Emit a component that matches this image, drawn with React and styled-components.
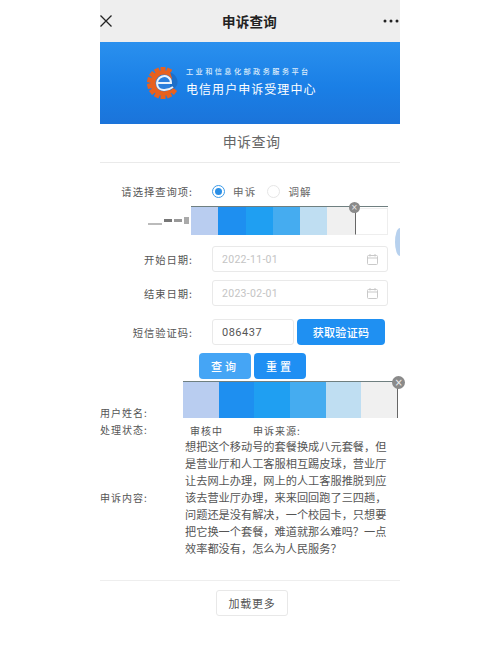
import React from "react";
import styled, { createGlobalStyle } from "styled-components";

const Global = createGlobalStyle`
  html, body { margin: 0; padding: 0; background: #fff; overflow: hidden; }
  body { font-family: "Noto Sans CJK SC", "Noto Sans", sans-serif; }
`;
const Phone = styled.div`
  position: relative; width: 300px; height: 655px; margin: 0 auto; background: #fff;
`;
const Nav = styled.div`
  height: 42px; background: #eeeeee; display: flex; align-items: center; justify-content: space-between;
  padding-right: 1px; box-sizing: border-box;
`;
const NavTitle = styled.div`font-size: 13.5px; font-weight: 700; color: #222; letter-spacing: .3px; margin-left: 3px;`;
const Banner = styled.div`
  height: 82px; background: linear-gradient(180deg, #2a90ee 0%, #1a7fe6 55%, #1b74da 100%);
  display: flex; align-items: center; padding-left: 46px; box-sizing: border-box; gap: 6px;
`;
const BannerText = styled.div`display: flex; flex-direction: column; color: #fff; margin-top: -2px;`;
const BannerSmall = styled.div`font-size: 7.2px; line-height: 11px; letter-spacing: 2.4px; font-weight: 500; color: #dcecfb;`;
const BannerBig = styled.div`font-size: 12px; line-height: 18px; letter-spacing: 1.05px; margin-top: 3px;`;
const Heading = styled.div`
  height: 38px; border-bottom: 1px solid #eaeaea; display: flex; align-items: center; justify-content: center;
  box-sizing: content-box; font-size: 14px; color: #666; letter-spacing: .4px; padding-left: 3px; line-height: 34px;
  & > span { display: block; margin-top: -4px; }
`;
const Form = styled.div`display: flex; flex-direction: column; padding-top: 17px;`;
const Row = styled.div`display: flex; align-items: center; height: ${p => p.$h}px; margin-top: ${p => p.$mt || 0}px; margin-bottom: ${p => p.$mb || 0}px;`;
const Label = styled.div`
  width: 93px; text-align: right; font-size: 10.3px; color: #555; letter-spacing: 1px; flex: none; white-space: nowrap;
`;
const Radios = styled.div`display: flex; align-items: center; margin-left: 19px; font-size: 10.5px; color: #666; letter-spacing: 1.2px;`;
const Radio = styled.span`
  width: 13px; height: 13px; border-radius: 50%; box-sizing: border-box; margin-right: 8px; flex: none;
  border: 1px solid ${p => p.$on ? "#3c9be8" : "#e6e6e6"}; display: flex; align-items: center; justify-content: center;
  &::after { content: ""; width: 7px; height: 7px; border-radius: 50%; background: ${p => p.$on ? "#2b8fe6" : "transparent"}; }
`;
const RadioText = styled.span`margin-right: ${p => p.$mr || 0}px;`;
const BlurLabel = styled.div`width: 90px; display: flex; justify-content: flex-end; align-items: center; flex: none; gap: 2px; padding-right: 1px; box-sizing: border-box;`;
const BlurMark = styled.span`display: block; width: ${p => p.$w}px; height: ${p => p.$h}px; background: ${p => p.$c}; margin-top: ${p => p.$t || 0}px;`;
const Redact = styled.div`
  position: relative; display: flex; flex: none; height: ${p => p.$h}px; margin-left: ${p => p.$ml || 0}px;
  border-top: 1px solid #6f7f80; box-sizing: border-box;
  border-right: ${p => p.$edge ? "1px solid #666" : "none"};
`;
const Swatch = styled.div`width: ${p => p.$w}px; background: ${p => p.$c};`;
const Badge = styled.span`
  position: absolute; top: ${p => p.$t}px; right: ${p => p.$r}px; width: ${p => p.$s}px; height: ${p => p.$s}px; border-radius: 50%;
  background: #8a8a8a; color: #eee; font-size: ${p => p.$s - 3}px; line-height: ${p => p.$s}px; text-align: center; font-family: "DejaVu Sans", sans-serif;
`;
const RedactEnd = styled.div`width: 33px; height: 27px; margin-top: 1px; border: 1px solid #eee; border-left: 1px solid #666; box-sizing: border-box; background: #fff; flex: none;`;
const DateField = styled.div`
  margin-left: 19px; width: 176px; height: 26px; border: 1px solid #e9e9e9; border-radius: 3px; box-sizing: border-box;
  display: flex; align-items: center; justify-content: space-between; padding: 0 9px; font-size: 10.5px; color: #c4c4c4; letter-spacing: .3px;
  font-family: "Roboto", sans-serif;
`;
const CodeRow = styled.div`display: flex; margin-left: 19px; gap: 3px;`;
const CodeInput = styled.div`
  width: 82px; height: 26px; border: 1px solid #e9e9e9; border-radius: 3px; box-sizing: border-box; display: flex; align-items: center;
  padding-left: 9px; font-size: 11px; color: #555; letter-spacing: .5px; font-family: "Roboto", sans-serif;
`;
const Primary = styled.div`
  width: ${p => p.$w}px; height: 26px; background: ${p => p.$c}; color: #fff; border-radius: 4px; display: flex; align-items: center; justify-content: center;
  font-size: 11px; letter-spacing: ${p => p.$ls}px; font-weight: 500; flex: none;
`;
const Actions = styled.div`display: flex; gap: 3px; margin-left: 99px; height: 26px; margin-top: 8px;`;
const Results = styled.div`display: flex; flex-direction: column; margin-top: 2px;`;
const ResultRow = styled.div`display: flex; align-items: flex-end; height: 37px;`;
const ResultLabel = styled.div`width: 83px; font-size: 10px; line-height: 14px; color: #555; letter-spacing: 1px; flex: none; white-space: nowrap; margin-bottom: ${p => p.$mb || 0}px;`;
const StatusRow = styled.div`display: flex; height: 20px; align-items: center; font-size: 10px; color: #555; letter-spacing: 1px; padding-top: 4px; box-sizing: border-box;`;
const StatusValue = styled.span`margin-left: ${p => p.$ml}px; white-space: nowrap;`;
const ContentRow = styled.div`display: flex; align-items: center;`;
const ContentText = styled.div`
  width: 203px; margin-left: 2px; font-size: 11.2px; line-height: 17px; color: #555;
`;
const Divider = styled.div`height: 1px; background: #eeeeee; margin-top: 23px;`;
const More = styled.div`
  width: 72px; height: 26px; margin: 9px 0 0 116px; border: 1px solid #e8e8e8; border-radius: 3px; box-sizing: border-box;
  display: flex; align-items: center; justify-content: center; font-size: 11px; color: #555; letter-spacing: .8px;
`;
const Floater = styled.span`
  position: absolute; right: 0; top: 228px; width: 5px; height: 28px; border-radius: 5px 0 0 5px / 14px 0 0 14px; background: #b7d1ee;
`;

const cal = (
  <svg width="11" height="11" viewBox="0 0 11 11" fill="none" stroke="#c9c9c9" strokeWidth="1">
    <rect x="0.5" y="1.5" width="10" height="9" rx="1" />
    <path d="M0.5 4h10M3 0v2.500M8 0v2.500" />
  </svg>
);

const colors = ["#b9cdf0", "#1e8ff0", "#1f9ff2", "#45acf0", "#bfdef2", "#f0f0f0"];

const complaint = "想把这个移动号的套餐换成八元套餐\uFF0C但是营业厅和人工客服相互踢皮球\uFF0C营业厅让去网上办理\uFF0C网上的人工客服推脱到应该去营业厅办理\uFF0C来来回回跑了三四趟\uFF0C问题还是没有解决\uFF0C一个校园卡\uFF0C只想要把它换一个套餐\uFF0C难道就那么难吗\uFF1F一点效率都没有\uFF0C怎么为人民服务\uFF1F";

function Logo() {
  const teeth = Array.from({ length: 14 }, (_, i) => i * 360 / 14).filter(a => a < 30 || a > 110);
  return (
    <svg width="34" height="34" viewBox="0 0 34 34">
      {teeth.map(a => (
        <rect key={a} x="14.500" y="1" width="5" height="6" fill="#e8611e" transform={`rotate(${a} 17 17)`} />
      ))}
      <circle cx="17" cy="17" r="12.500" fill="#e8611e" />
      <circle cx="18" cy="17" r="8.500" fill="#2a7fdc" />
      <path d="M24 6 C30 9 33 14 31 19 C29 23 26 24 24 25 L24 18 L26 12 Z" fill="#1c6fc9" />
      <path d="M11.500 17 H25 C25 11.500 20 9 16 10.500 C12 12 10 16 11.500 20 C13.500 25 21 25.500 27 21" fill="none" stroke="#eaf3fb" strokeWidth="2" />
      <path d="M13.500 26 C18 28.500 24 27.500 28 23" fill="none" stroke="#e8611e" strokeWidth="2.500" />
    </svg>
  );
}

export default function App() {
  return (
    <Phone>
      <Global />
      <Nav>
        <svg width="13" height="14" viewBox="0 0 13 14" stroke="#222" strokeWidth="1.300" fill="none">
          <path d="M0.500 1.500 L11.500 12.500 M11.500 1.500 L0.500 12.500" />
        </svg>
        <NavTitle>申诉查询</NavTitle>
        <svg width="16" height="4" viewBox="0 0 16 4" fill="#222">
          <circle cx="2" cy="2" r="1.500" /><circle cx="8" cy="2" r="1.500" /><circle cx="14" cy="2" r="1.500" />
        </svg>
      </Nav>
      <Banner>
        <Logo />
        <BannerText>
          <BannerSmall>工业和信息化部政务服务平台</BannerSmall>
          <BannerBig>电信用户申诉受理中心</BannerBig>
        </BannerText>
      </Banner>
      <Heading><span>申诉查询</span></Heading>
      <Form>
        <Row $h={22}>
          <Label>请选择查询项:</Label>
          <Radios>
            <Radio $on /><RadioText $mr={11}>申诉</RadioText>
            <Radio /><RadioText>调解</RadioText>
          </Radios>
        </Row>
        <Row $h={29} $mb={11} $mt={4}>
          <BlurLabel>
            <BlurMark $w={14} $h={2} $c="#bbb" $t={6} />
            <BlurMark $w={8} $h={3} $c="#777" />
            <BlurMark $w={8} $h={3} $c="#999" />
            <BlurMark $w={5} $h={7} $c="#aaa" />
          </BlurLabel>
          <Redact $h={29} $ml={1}>
            {colors.map(c => <Swatch key={c} $w={27.300} $c={c} />)}
            <RedactEnd />
            <Badge $t={-5} $r={28} $s={11}>×</Badge>
          </Redact>
        </Row>
        <Row $h={26} $mb={8}>
          <Label>开始日期:</Label>
          <DateField>2022-11-01{cal}</DateField>
        </Row>
        <Row $h={26} $mb={13}>
          <Label>结束日期:</Label>
          <DateField>2023-02-01{cal}</DateField>
        </Row>
        <Row $h={26}>
          <Label>短信验证码:</Label>
          <CodeRow>
            <CodeInput>086437</CodeInput>
            <Primary $w={88} $c="#1f90f2" $ls={0.3}>获取验证码</Primary>
          </CodeRow>
        </Row>
        <Actions>
          <Primary $w={52} $c="#45a5f5" $ls={3}>查询</Primary>
          <Primary $w={52} $c="#1f8ff3" $ls={3}>重置</Primary>
        </Actions>
      </Form>
      <Results>
        <ResultRow>
          <ResultLabel $mb={-2}>用户姓名:</ResultLabel>
          <Redact $h={37} $edge>
            {colors.map(c => <Swatch key={c} $w={35.700} $c={c} />)}
            <Badge $t={-6} $r={-8} $s={13}>×</Badge>
          </Redact>
        </ResultRow>
        <StatusRow>
          <ResultLabel>处理状态:</ResultLabel>
          <StatusValue $ml={7}>审核中</StatusValue>
          <StatusValue $ml={30}>申诉来源:</StatusValue>
        </StatusRow>
        <ContentRow>
          <ResultLabel>申诉内容:</ResultLabel>
          <ContentText>{complaint}</ContentText>
        </ContentRow>
      </Results>
      <Divider />
      <More>加载更多</More>
      <Floater />
    </Phone>
  );
}
